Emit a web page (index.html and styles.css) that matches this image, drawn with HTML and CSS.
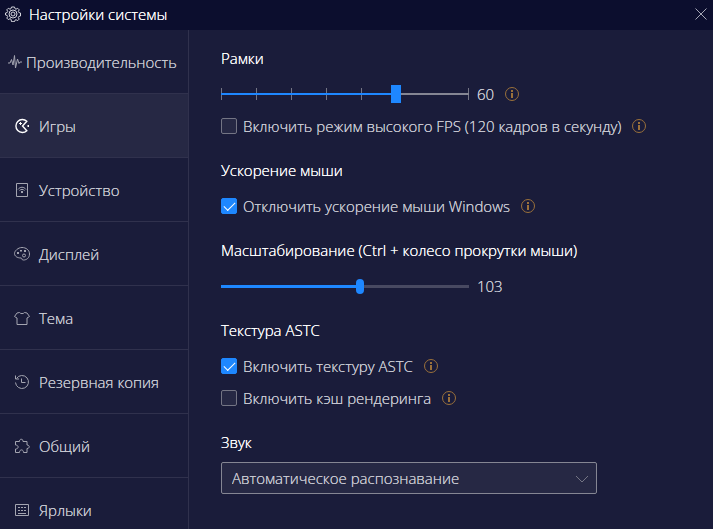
FILE: index.html
```html
<!DOCTYPE html>
<html lang="ru">
<head>
<meta charset="utf-8">
<title>Настройки системы</title>
<link rel="stylesheet" href="styles.css">
</head>
<body>
<header class="titlebar">
  <svg class="icon" viewBox="0 0 16 16"><path d="M6.500 1h3l.5 1.700 1 .5 1.700-.9 1.500 1.500-.9 1.700.5 1 1.700.5v3l-1.700.5-.5 1 .9 1.600-1.500 1.500-1.700-.9-1 .5-.5 1.500h-3L6 13.200l-1-.5-1.700.9-1.500-1.500.9-1.600-.5-1L.500 9V7l1.700-.5.5-1-.9-1.700 1.500-1.500L5 3.200l1-.5z"/><circle cx="8" cy="8" r="4"/><circle cx="8" cy="8" r="2"/></svg>
  <h1 class="title">Настройки системы</h1>
  <button class="close" type="button" aria-label="Закрыть"><svg viewBox="0 0 12 12"><path d="M.5.5l11 11M11.500.5l-11 11"/></svg></button>
</header>
<div class="layout">
  <nav class="sidebar">
    <a class="item item-wide" href="#"><svg class="icon" viewBox="0 0 16 16"><path d="M1 9h2l1.500-3.500L6 11l1.500-9.500L8.500 14l2-9L12 9.500l1-1.500h2"/></svg>Производительность</a>
    <a class="item active" href="#"><svg class="icon" viewBox="0 0 16 16"><path class="bold" d="M12.800 3.200A6.500 6.500 0 1 0 12.800 12.800L8.500 8z"/><path class="dots" d="M6 4h1v1h1v1H7v1H6V6H5V5h1zM13.500 7h1.500v2h-1.500z"/></svg>Игры</a>
    <a class="item" href="#"><svg class="icon" viewBox="0 0 16 16"><path d="M2.500 1.500h11v13h-11zM4 7.500c2-3 6-3 8 0M5.500 8.500c1.500-1.500 3.500-1.500 5 0"/><path class="dots" d="M7 9h2v2H7z"/></svg>Устройство</a>
    <a class="item" href="#"><svg class="icon" viewBox="0 0 16 16"><path d="M7 12C3 12 .5 10 .5 7.500S4 1.500 8 1.500s7.500 2.500 7.500 6.500-3 6-6 6c-2.500 0-1-2-2.500-2z"/><circle cx="10" cy="9.500" r="1.500"/><path class="dots" d="M3 6h2v2H3zM6 4h2v1.500H6zM10 4h2v2h-2z"/></svg>Дисплей</a>
    <a class="item" href="#"><svg class="icon" viewBox="0 0 16 16"><path d="M5.500 2.500c1 1.500 4 1.500 5 0L13 3l2.500 3.500-2.500 1.500v6.500H3V8L.5 6.500 3 3z"/></svg>Тема</a>
    <a class="item" href="#"><svg class="icon" viewBox="0 0 16 16"><path d="M2.500 4.500a6.500 6.500 0 1 1-1 4M1.500 1.500v3.500H5M7.500 4.500v4h4"/></svg>Резервная копия</a>
    <a class="item" href="#"><svg class="icon" viewBox="0 0 16 16"><path d="M1.500 3.500h4c-.5-3 4-3 3.500 0h4v3.500c3 0 3 3.500 0 3.500v4H9.500c0-3.500-4-3.500-4 0h-4V11c3.500 0 3.500-4 0-4z"/></svg>Общий</a>
    <a class="item" href="#"><svg class="icon" viewBox="0 0 16 16"><path d="M1.500 2.500h13v11h-13zM4 5.500h2M7 5.500h2M10 5.500h2M4 8.500h2M7 8.500h2M10 8.500h2M4 11.500h8"/></svg>Ярлыки</a>
  </nav>
  <main class="main">
    <section class="group">
      <h2><label for="fps">Рамки</label></h2>
      <div class="row"><input class="slider stepped" id="fps" type="range" min="10" max="80" step="10" value="60"><output for="fps">60</output><svg class="info" viewBox="0 0 14 14"><circle cx="7" cy="7" r="6.500"/><path d="M6 3h2v2H6zM6 6h2v5H6z"/></svg></div>
      <div class="row"><input class="check" id="hfps" type="checkbox"><label for="hfps">Включить режим высокого FPS (120 кадров в секунду)</label><svg class="info" viewBox="0 0 14 14"><circle cx="7" cy="7" r="6.500"/><path d="M6 3h2v2H6zM6 6h2v5H6z"/></svg></div>
    </section>
    <section class="group">
      <h2>Ускорение мыши</h2>
      <div class="row"><input class="check" id="accel" type="checkbox" checked><label for="accel">Отключить ускорение мыши Windows</label><svg class="info" viewBox="0 0 14 14"><circle cx="7" cy="7" r="6.500"/><path d="M6 3h2v2H6zM6 6h2v5H6z"/></svg></div>
    </section>
    <section class="group">
      <h2><label for="zoom">Масштабирование (Ctrl + колесо прокрутки мыши)</label></h2>
      <div class="row"><input class="slider smooth" id="zoom" type="range" min="0" max="183" value="103"><output for="zoom">103</output></div>
    </section>
    <section class="group">
      <h2>Текстура ASTC</h2>
      <div class="row"><input class="check" id="astc" type="checkbox" checked><label for="astc">Включить текстуру ASTC</label><svg class="info" viewBox="0 0 14 14"><circle cx="7" cy="7" r="6.500"/><path d="M6 3h2v2H6zM6 6h2v5H6z"/></svg></div>
      <div class="row"><input class="check" id="cache" type="checkbox"><label for="cache">Включить кэш рендеринга</label><svg class="info" viewBox="0 0 14 14"><circle cx="7" cy="7" r="6.500"/><path d="M6 3h2v2H6zM6 6h2v5H6z"/></svg></div>
    </section>
    <section class="group">
      <h2><label for="sound">Звук</label></h2>
      <div class="select-wrap"><select class="select" id="sound"><option>Автоматическое распознавание</option></select><svg class="chevron" viewBox="0 0 12 8"><path d="M0 1l6 6 6-6"/></svg></div>
    </section>
  </main>
</div>
</body>
</html>
```
FILE: styles.css
```css
* { box-sizing: border-box; }
body {
  margin: 0;
  height: 100vh;
  display: flex;
  flex-direction: column;
  overflow: hidden;
  background: #1a1c3a;
  color: #c9cad3;
  font: 300 15px/20px "Open Sans", "Noto Sans", sans-serif;
  text-shadow: 0 0 0 currentColor;
}
svg { fill: none; stroke: currentColor; flex: none; }
.icon { width: 16px; height: 16px; }
.icon .dots { fill: currentColor; stroke: none; }
.icon .bold { stroke-width: 1.4; }
.titlebar {
  display: flex;
  align-items: center;
  flex: none;
  gap: 8px;
  height: 30px;
  padding: 0 6px 2px 5px;
  background: #0c0e2e;
}
.titlebar .icon { color: #d5d6de; }
.title { margin: 0; flex: 1; font-size: 15px; font-weight: 300; color: #fff; text-shadow: 0 0 0 currentColor; }
.close { display: flex; padding: 0; border: 0; background: none; color: #a5a6b5; }
.close svg { width: 12px; height: 12px; }
.layout { display: flex; flex: 1; min-height: 0; }
.sidebar {
  flex: none;
  width: 189px;
  overflow: hidden;
  border-right: 1px solid #30314d;
}
.item {
  display: flex;
  align-items: center;
  gap: 9px;
  height: 64px;
  padding-left: 14px;
  border-bottom: 1px solid #30314d;
  color: inherit;
  text-decoration: none;
  white-space: nowrap;
}
.item .icon { color: #a4a5b1; }
.item-wide { gap: 3px; padding-left: 7px; }
.item.active { background: #262844; }
.item.active .icon { color: #fff; }
.main { flex: 1; min-width: 0; padding: 13px 32px; }
.group { margin-bottom: 13px; }
h2 { margin: 0 0 5px; font-size: 15px; line-height: 30px; font-weight: 300; color: #fff; text-shadow: 0 0 0 currentColor; }
.row { display: flex; align-items: center; height: 32px; }
.info { width: 14px; height: 14px; margin-left: 11px; color: #9b713b; }
.info path { fill: currentColor; stroke: none; }
.check {
  appearance: none;
  flex: none;
  width: 16px;
  height: 16px;
  margin: 0 6px 0 0;
  border: 1px solid #747584;
  border-radius: 2px;
  background: #262844;
}
.check:checked {
  display: grid;
  place-items: center;
  border-color: #1e87ff;
  background: #1e87ff;
}
.check:checked::before {
  content: "";
  width: 10px;
  height: 5px;
  margin-bottom: 3px;
  border: solid #fff;
  border-width: 0 0 1px 1px;
  transform: rotate(-45deg);
}
.slider { appearance: none; width: 248px; height: 18px; margin: 0 8px 0 0; background: none; }
.slider::-webkit-slider-thumb { appearance: none; background: #1e87ff; }
.stepped {
  background:
    linear-gradient(#1e87ff, #1e87ff) 0 8px / 175px 2px no-repeat,
    linear-gradient(#858693, #858693) 0 8px / 100% 2px no-repeat,
    linear-gradient(#747584, #747584) 100% 3px / 1px 12px no-repeat,
    repeating-linear-gradient(90deg, #747584 0 1px, transparent 1px 35px) 0 3px / 175px 12px no-repeat;
}
.stepped::-webkit-slider-thumb { width: 10px; height: 18px; }
.smooth {
  background:
    linear-gradient(#1e87ff, #1e87ff) 0 8px / 139px 3px no-repeat,
    linear-gradient(#484961, #484961) 0 8px / 100% 3px no-repeat;
}
.smooth::-webkit-slider-thumb { width: 8px; height: 15px; border-radius: 4px; }
.select-wrap { position: relative; max-width: 376px; }
.select {
  appearance: none;
  display: block;
  width: 100%;
  height: 32px;
  padding: 0 30px 0 10px;
  border: 1px solid #858693;
  border-radius: 2px;
  background: #262844;
  color: inherit;
  font: inherit;
  text-shadow: inherit;
}
.chevron { position: absolute; right: 9px; top: 13px; width: 12px; height: 8px; color: #747584; pointer-events: none; }
```
